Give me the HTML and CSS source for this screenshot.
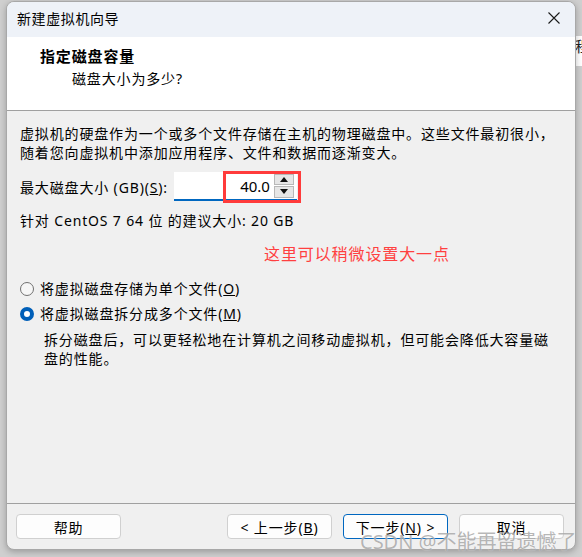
FILE: index.html
```html
<!DOCTYPE html>
<html lang="zh-CN">
<head>
<meta charset="utf-8">
<title>新建虚拟机向导</title>
<link rel="stylesheet" href="styles.css">
</head>
<body>
<div class="behind"><span class="behind-char">程</span></div>
<div class="window">
  <div class="titlebar">
    <span class="title">新建虚拟机向导</span>
    <svg class="close" width="12" height="12" viewBox="0 0 12 12"><path d="M0.5 0.5L11.5 11.5M11.5 0.5L0.5 11.5" stroke="#1a1a1a" stroke-width="1.1" fill="none"/></svg>
  </div>
  <div class="header">
    <div class="h-title">指定磁盘容量</div>
    <div class="h-sub">磁盘大小为多少?</div>
  </div>
  <div class="content">
    <div class="para">
      <div>虚拟机的硬盘作为一个或多个文件存储在主机的物理磁盘中。这些文件最初很小，</div>
      <div>随着您向虚拟机中添加应用程序、文件和数据而逐渐变大。</div>
    </div>
    <div class="size-row">
      <span class="label">最大磁盘大小 (GB)(<u>S</u>):</span>
      <div class="spin">
        <span class="spin-value">40.0</span>
        <div class="spin-btns">
          <div class="spin-btn"><svg width="8" height="5" viewBox="0 0 8 5"><path d="M0 5L4 0L8 5Z" fill="#111"/></svg></div>
          <div class="spin-btn"><svg width="8" height="5" viewBox="0 0 8 5"><path d="M0 0L4 5L8 0Z" fill="#111"/></svg></div>
        </div>
        <div class="annot-box"></div>
      </div>
    </div>
    <div class="recommend">针对 CentOS 7 64 位 的建议大小: 20 GB</div>
    <div class="note">这里可以稍微设置大一点</div>
    <div class="radio-row">
      <span class="radio"></span>
      <span>将虚拟磁盘存储为单个文件(<u>O</u>)</span>
    </div>
    <div class="radio-row second">
      <span class="radio checked"></span>
      <span>将虚拟磁盘拆分成多个文件(<u>M</u>)</span>
    </div>
    <div class="desc">
      <div>拆分磁盘后，可以更轻松地在计算机之间移动虚拟机，但可能会降低大容量磁</div>
      <div>盘的性能。</div>
    </div>
  </div>
  <div class="footer">
    <button class="btn">帮助</button>
    <div class="spacer"></div>
    <button class="btn">&lt; 上一步(<u>B</u>)</button>
    <button class="btn primary">下一步(<u>N</u>) &gt;</button>
    <button class="btn">取消</button>
  </div>
</div>
<div class="watermark">CSDN @不能再留遗憾了</div>
</body>
</html>
```
FILE: styles.css
```css
* { box-sizing: border-box; }
html, body {
  margin: 0;
  padding: 0;
}
body {
  width: 582px;
  height: 557px;
  overflow: hidden;
  background: #cfcfcf;
  position: relative;
  font-family: "Noto Sans", "Noto Sans CJK SC", sans-serif;
  font-size: 14px;
  letter-spacing: 0.85px;
  color: #000;
}
.behind {
  position: absolute;
  left: 572px;
  top: 36px;
  width: 10px;
  height: 30px;
  background: #fff;
  overflow: hidden;
}
.behind-char {
  position: absolute;
  left: 3px;
  top: 2px;
  font-size: 15px;
  line-height: 16px;
  color: #222;
}
.window {
  position: relative;
  margin: 1px 0 0 6px;
  width: 570px;
  height: 549px;
  border: 1px solid #a8a8a8;
  border-radius: 8px;
  overflow: hidden;
  background: #f0f0f0;
  display: flex;
  flex-direction: column;
  box-shadow: 0 2px 6px rgba(0,0,0,0.25);
}
.titlebar {
  height: 35px;
  flex: none;
  background: #eef2f8;
  display: flex;
  align-items: center;
  padding: 0 15px 0 10px;
  justify-content: space-between;
}
.title {
  font-size: 14px;
  letter-spacing: 0.6px;
  padding-bottom: 3px;
}
.close { margin-bottom: 3px; }
.header {
  height: 74px;
  flex: none;
  background: #fff;
  border-bottom: 1px solid #a0a0a0;
  padding: 9px 0 0 33px;
}
.h-title {
  font-weight: bold;
  font-size: 15px;
  line-height: 20px;
}
.h-sub {
  margin-left: 32px;
  line-height: 20px;
  margin-top: 3px;
}
.content {
  flex: 1;
  padding: 13px 0 0 13px;
}
.para {
  line-height: 19px;
  white-space: nowrap;
}
.size-row {
  margin-top: 10px;
  display: flex;
  align-items: center;
  height: 29px;
}
.label { margin-right: 6px; }
.spin {
  position: relative;
  width: 123px;
  height: 29px;
  background: #fff;
  border-bottom: 2px solid #0067c0;
  display: flex;
  align-items: center;
  justify-content: flex-end;
  padding-right: 3px;
}
.spin-value {
  font-size: 15px;
  letter-spacing: 0;
  margin-right: 4px;
}
.spin-btns {
  display: flex;
  flex-direction: column;
  width: 20px;
  height: 24px;
  gap: 1px;
}
.spin-btn {
  flex: 1;
  background: #e6e6e6;
  border: 1px solid #b8b8b8;
  display: flex;
  align-items: center;
  justify-content: center;
}
.annot-box {
  position: absolute;
  left: 49px;
  top: -1px;
  width: 78px;
  height: 32px;
  border: 3px solid #ff3b3b;
}
.recommend {
  margin-top: 11px;
  line-height: 18px;
}
.note {
  margin-top: 13px;
  margin-left: 244px;
  font-size: 16px;
  letter-spacing: 0.9px;
  line-height: 22px;
  color: #ff4040;
}
.radio-row {
  margin-top: 14px;
  display: flex;
  align-items: center;
  line-height: 20px;
}
.radio-row.second { margin-top: 5px; }
.radio {
  width: 14px;
  height: 14px;
  border-radius: 50%;
  border: 1.5px solid #707070;
  background: #f6f6f6;
  margin: 0 6px 0 0;
}
.radio.checked {
  border: 4px solid #005fb8;
  background: #fff;
}
.desc {
  margin: 6px 0 0 24px;
  line-height: 19px;
  white-space: nowrap;
}
.footer {
  height: 46px;
  flex: none;
  border-top: 1px solid #a0a0a0;
  display: flex;
  align-items: flex-start;
  padding: 10px 11px 0 9px;
  gap: 11px;
}
.spacer { flex: 1; }
.btn {
  width: 105px;
  height: 25px;
  background: #fdfdfd;
  border: 1px solid #d0d0d0;
  border-radius: 4px;
  font-family: inherit;
  font-size: 14px;
  letter-spacing: 0.85px;
  color: #000;
  padding: 0;
}
.btn.primary {
  border-color: #0067c0;
}
.watermark {
  position: absolute;
  left: 360px;
  top: 526px;
  font-size: 20px;
  letter-spacing: 0;
  color: rgba(120,120,120,0.55);
  text-shadow: 0 0 1px rgba(255,255,255,0.8);
  white-space: nowrap;
}
```
